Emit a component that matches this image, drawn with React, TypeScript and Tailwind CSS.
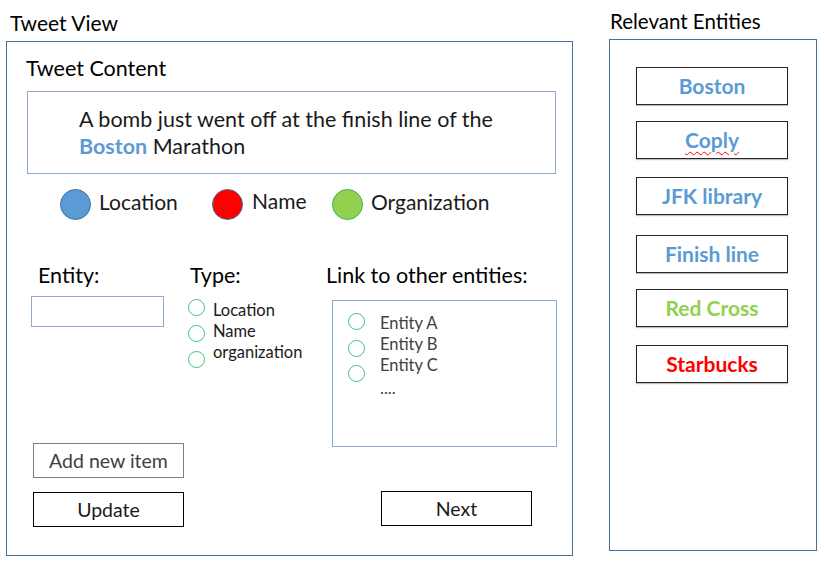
import React from "react";

function Radio({ mt }: { mt: string }) {
  return <div className={`w-[17px] h-[17px] shrink-0 rounded-full border-[1.5px] border-[#3cc47c] bg-white ${mt}`} />;
}

function EntityBox({ label, color, mt, wavy }: { label: string; color: string; mt: string; wavy?: boolean }) {
  return (
    <div
      className={`ml-[26px] w-[152px] h-[38px] border border-[#262626] shadow-[0_1px_1px_rgba(0,0,0,0.25)] flex items-center justify-center text-[21px] font-bold leading-[24px] ${color} ${mt}`}
    >
      {wavy ? (
        <span className="underline decoration-wavy decoration-[#ff0000] decoration-1 underline-offset-[3px]">{label}</span>
      ) : (
        label
      )}
    </div>
  );
}

export default function App() {
  return (
    <div className="w-[824px] h-[563px] bg-white flex items-start font-['Lato',sans-serif] text-black">
      {/* Left: Tweet View */}
      <div className="ml-[6px] flex flex-col">
        <div className="pt-[11px] pl-[4px] text-[21px] leading-[24px]">Tweet View</div>
        <div className="mt-[6px] w-[567px] h-[515px] border border-[#41719c] flex flex-col">
          <div className="mt-[14px] ml-[19px] text-[21.5px] leading-[24px]">Tweet Content</div>
          <div className="mt-[11px] ml-[20px] w-[529px] h-[83px] border border-[#8faad0] pt-[14px] pl-[51px] text-[21.5px] leading-[27px] text-[#1a1a1a]">
            A bomb just went off at the finish line of the
            <br />
            <span className="font-bold text-[#5b9bd5]">Boston</span> Marathon
          </div>

          {/* Legend */}
          <div className="mt-[15px] ml-[53px] flex items-start text-[21px] leading-[24px] text-[#1a1a1a]">
            <div className="w-[152px] flex items-start gap-[8px]">
              <div className="w-[31px] h-[31px] rounded-full bg-[#5b9bd5] border border-[#41719c]" />
              <span className="mt-[1px]">Location</span>
            </div>
            <div className="w-[120px] flex items-start gap-[9px]">
              <div className="w-[31px] h-[31px] rounded-full bg-[#ff0000] border border-[#41719c]" />
              <span>Name</span>
            </div>
            <div className="flex items-start gap-[8px]">
              <div className="w-[31px] h-[31px] rounded-full bg-[#92d050] border border-[#3cb44b]" />
              <span className="mt-[1px]">Organization</span>
            </div>
          </div>

          {/* Middle section */}
          <div className="mt-[43px] ml-[24px] flex items-start">
            {/* Entity column */}
            <div className="w-[157px] flex flex-col">
              <div className="pl-[7px] text-[21.5px] leading-[24px]">Entity:</div>
              <div className="mt-[9px] w-[133px] h-[31px] border border-[#8faad0]" />
              <div className="mt-[116px] ml-[2px] w-[151px] h-[35px] border-[1.5px] border-[#7f7f7f] flex items-center justify-center text-[19.5px] leading-[24px] text-[#404040]">
                Add new item
              </div>
              <div className="mt-[14px] ml-[2px] w-[151px] h-[35px] border border-black flex items-center justify-center text-[19.5px] leading-[24px] text-[#1a1a1a]">
                Update
              </div>
            </div>

            {/* Type column */}
            <div className="w-[138px] flex flex-col">
              <div className="pl-[2px] text-[21.5px] leading-[24px]">Type:</div>
              <div className="mt-[13px] flex flex-col text-[16.5px] leading-[21px] text-[#1a1a1a]">
                <div className="h-[21px] flex items-start">
                  <Radio mt="-mt-px" />
                  <span className="ml-[8px]">Location</span>
                </div>
                <div className="h-[21px] flex items-start">
                  <Radio mt="mt-[4px]" />
                  <span className="ml-[8px]">Name</span>
                </div>
                <div className="h-[21px] flex items-start">
                  <Radio mt="mt-[9px]" />
                  <span className="ml-[8px]">organization</span>
                </div>
              </div>
            </div>

            {/* Link column */}
            <div className="flex flex-col">
              <div className="text-[21.5px] leading-[24px]">Link to other entities:</div>
              <div className="mt-[13px] ml-[6px] w-[225px] h-[147px] border border-[#8faad0] pt-[12px] pl-[15px] flex flex-col text-[16.5px] leading-[21px] text-[#404040]">
                <div className="h-[21px] flex items-start">
                  <Radio mt="mt-0" />
                  <span className="ml-[15px]">Entity A</span>
                </div>
                <div className="h-[21px] flex items-start">
                  <Radio mt="mt-[6px]" />
                  <span className="ml-[15px]">Entity B</span>
                </div>
                <div className="h-[21px] flex items-start">
                  <Radio mt="mt-[10px]" />
                  <span className="ml-[15px]">Entity C</span>
                </div>
                <div className="h-[21px] mt-[2px] flex items-start">
                  <div className="w-[17px] shrink-0" />
                  <span className="ml-[15px]">....</span>
                </div>
              </div>
              <div className="mt-[44px] ml-[55px] w-[151px] h-[35px] border border-black flex items-center justify-center text-[19.5px] leading-[24px] text-[#1a1a1a]">
                Next
              </div>
            </div>
          </div>
        </div>
      </div>

      {/* Right: Relevant Entities */}
      <div className="ml-[36px] flex flex-col">
        <div className="pt-[10px] pl-[1px] text-[20.5px] leading-[22px]">Relevant Entities</div>
        <div className="mt-[7px] w-[208px] h-[512px] border border-[#41719c] flex flex-col">
          <EntityBox label="Boston" color="text-[#5b9bd5]" mt="mt-[27px]" />
          <EntityBox label="Coply" color="text-[#5b9bd5]" mt="mt-[16px]" wavy />
          <EntityBox label="JFK library" color="text-[#5b9bd5]" mt="mt-[18px]" />
          <EntityBox label="Finish line" color="text-[#5b9bd5]" mt="mt-[20px]" />
          <EntityBox label="Red Cross" color="text-[#92d050]" mt="mt-[16px]" />
          <EntityBox label="Starbucks" color="text-[#ff0000]" mt="mt-[18px]" />
        </div>
      </div>
    </div>
  );
}
